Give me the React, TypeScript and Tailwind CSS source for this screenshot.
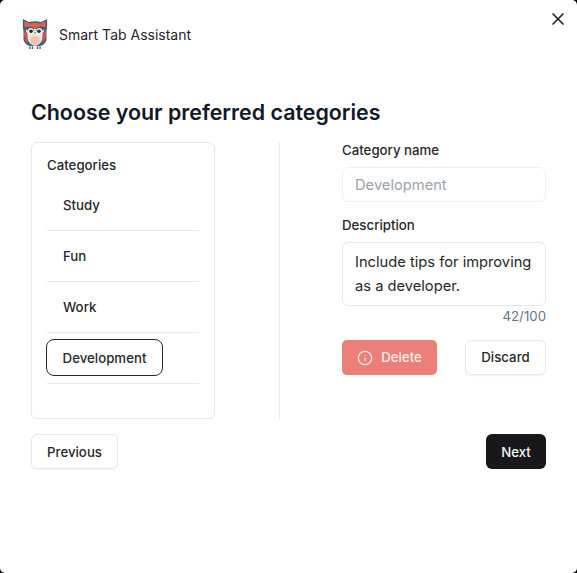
import { Info, X } from 'lucide-react';

const categories = ['Study', 'Fun', 'Work'];

function OwlLogo() {
  return (
    <svg viewBox="0 0 26 32" className="h-[32px] w-[26px]">
      <path d="M1 1 L7 4 Q13 2.5 19 4 L25 1 Q25.5 9 24.5 13 L24.5 22 Q23 27 18 28 L8 28 Q3 27 1.5 22 L1.5 13 Q0.5 9 1 1 Z" fill="#40607a" />
      <path d="M4 11 Q4 26 13 28 Q22 26 22 11 Z" fill="#e6e9e3" />
      <path d="M2 13 Q1.5 21 5 25.5 Q6.5 21 5 14 Z" fill="#c2594d" />
      <path d="M24 13 Q24.5 21 21 25.5 Q19.5 21 21 14 Z" fill="#c2594d" />
      <path d="M2.5 3 L8 5.5 Q13 4 18 5.5 L23.5 3 Q24.5 7 23 9.5 Q18 7 13 11 Q8 7 3 9.5 Q1.5 7 2.5 3 Z" fill="#e0604d" />
      <path d="M4 11 Q8.5 7.5 12.5 12.5 L8 15 Z M22 11 Q17.5 7.5 13.5 12.5 L18 15 Z" fill="#3b556c" />
      <circle cx="8.7" cy="13" r="2.9" fill="#eef0ea" />
      <circle cx="17.3" cy="13" r="2.9" fill="#eef0ea" />
      <circle cx="9" cy="13.2" r="1.8" fill="#1f2c3b" />
      <circle cx="17" cy="13.2" r="1.8" fill="#1f2c3b" />
      <path d="M11.8 14 L14.2 14 L13 16.8 Z" fill="#e3963a" />
      <ellipse cx="13" cy="22.5" rx="5" ry="4.6" fill="#f3c3aa" />
      <path d="M8 28.5 L8 31 M10.5 28.5 L10.5 31 M15.5 28.5 L15.5 31 M18 28.5 L18 31" stroke="#40607a" strokeWidth="1.4" />
    </svg>
  );
}

export default function App() {
  return (
    <div className="h-[573px] w-[577px] bg-black font-['Inter',sans-serif]">
      <div className="relative flex h-full w-full flex-col rounded-[5px] bg-white px-[31px] text-[#1f2937]">
        <button className="absolute right-[9px] top-[9px] text-[#1f2430]">
          <X className="h-[20px] w-[20px]" strokeWidth={2} />
        </button>

        <div className="-ml-[9px] mt-[18px] flex h-[32px] items-center gap-[11px]">
          <OwlLogo />
          <span className="text-[14px] text-[#27272a]">Smart Tab Assistant</span>
        </div>

        <h1 className="mt-[46px] text-[21.4px] font-semibold leading-[32px] text-[#111827]">Choose your preferred categories</h1>

        <div className="mt-[14px] flex h-[277px]">
          <div className="w-[184px] shrink-0 rounded-[6px] border border-[#e5e7eb] px-[15px] pt-[13px]">
            <p className="text-[13.25px] font-medium leading-[18px] text-[#27272a]">Categories</p>
            <div className="mt-[6px]">
              {categories.map(c => (
                <div key={c} className="flex h-[51px] items-center border-b border-[#e5e7eb] pl-[16px] pt-[2px] text-[13.25px] font-medium text-[#27272a]">{c}</div>
              ))}
              <div className="flex h-[51px] items-center border-b border-[#e5e7eb] pb-[2px]">
                <div className="-ml-px flex h-[37px] w-[117px] items-center justify-center rounded-[8px] border border-[#27272a] pt-[4px] text-[13.25px] font-medium text-[#27272a]">Development</div>
              </div>
            </div>
          </div>

          <div className="ml-[64px] w-px bg-[#e5e7eb]" />

          <div className="ml-[62px] flex w-[204px] flex-col">
            <label className="-mt-px text-[13.25px] font-medium leading-[18px] text-[#27272a]">Category name</label>
            <div className="mt-[8px] flex h-[35px] items-center rounded-[6px] border border-[#eef0f3] px-[12px] pt-[2px] text-[14.7px] text-[#9ca3af]">Development</div>
            <label className="mt-[14px] text-[13.25px] font-medium leading-[18px] text-[#27272a]">Description</label>
            <div className="mt-[8px] h-[64px] rounded-[6px] border border-[#e5e7eb] px-[12px] py-[7px] text-[14.7px] leading-[24px] text-[#27272a]">Include tips for improving as a developer.</div>
            <p className="mt-[1px] text-right text-[13.25px] leading-[18px] text-[#64748b]">42/100</p>
            <div className="mt-[15px] flex justify-between">
              <button className="flex h-[35px] w-[95px] items-center justify-center gap-[8px] rounded-[5px] bg-[#ec7f78] text-[13.25px] font-medium text-[#fdecea]">
                <Info className="h-[16px] w-[16px]" strokeWidth={1.75} />
                Delete
              </button>
              <button className="h-[35px] w-[81px] rounded-[6px] border border-[#e5e7eb] text-[13.25px] font-medium text-[#27272a] shadow-xs">Discard</button>
            </div>
          </div>
        </div>

        <div className="mt-[15px] flex justify-between">
          <button className="h-[35px] w-[87px] rounded-[6px] border border-[#e5e7eb] pt-[2px] text-[13.25px] font-medium text-[#27272a] shadow-xs">Previous</button>
          <button className="h-[35px] w-[60px] rounded-[6px] bg-[#18181b] pt-[2px] text-[13.25px] font-medium text-[#f4f4f5]">Next</button>
        </div>
      </div>
    </div>
  );
}
